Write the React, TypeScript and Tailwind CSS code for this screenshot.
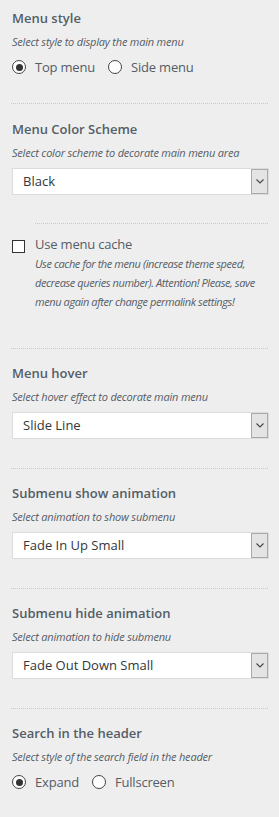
import React from 'react';

const font = { fontFamily: '"Open Sans", "Noto Sans", sans-serif' };

function Separator({ indent = false }: { indent?: boolean }) {
  return (
    <div
      className={`h-0 border-t border-dotted border-[#c8c8c8] mr-[11px] ${indent ? 'ml-[35px]' : 'ml-[11px]'}`}
    />
  );
}

function Title({ children }: { children: React.ReactNode }) {
  return <div className="text-[13px] leading-[20px] font-semibold text-[#555d66]">{children}</div>;
}

function Hint({ children }: { children: React.ReactNode }) {
  return <div className="mt-[5px] text-[11px] leading-[18px] italic tracking-[-0.2px] text-[#555d66]">{children}</div>;
}

function Radio({ checked, label }: { checked?: boolean; label: string }) {
  return (
    <label className="flex items-center gap-[9px]">
      <span className="flex h-[14px] w-[14px] items-center justify-center rounded-full border border-[#444] bg-white">
        {checked && <span className="h-[7px] w-[7px] rounded-full bg-[#333]" />}
      </span>
      <span className="text-[13px] leading-[20px] tracking-[-0.2px] text-[#555d66]">{label}</span>
    </label>
  );
}

function Select({ value }: { value: string }) {
  return (
    <div className="mt-[6px] flex h-[27px] items-stretch border border-[#dcdcdc] bg-white">
      <div className="flex flex-1 items-center pl-[10px] text-[13px] text-[#32373c]">{value}</div>
      <div className="m-0 flex w-[17px] items-center justify-center border border-[#a9a9a9] bg-[#e4e4e4]">
        <svg width="8" height="5" viewBox="0 0 8 5" fill="none">
          <path d="M0.5 0.5 L4 4 L7.5 0.5" stroke="#444" strokeWidth="1.1" />
        </svg>
      </div>
    </div>
  );
}

function SelectSection({ title, hint, value }: { title: string; hint: string; value: string }) {
  return (
    <div className="pl-[12px] pr-[10px] pt-[14px] pb-[29px]">
      <Title>{title}</Title>
      <Hint>{hint}</Hint>
      <Select value={value} />
    </div>
  );
}

export default function App() {
  return (
    <div className="min-h-[817px] w-[279px] bg-[#eeeeee]" style={font}>
      {/* Menu style */}
      <div className="pl-[12px] pr-[10px] pt-[8px] pb-[26px]">
        <Title>Menu style</Title>
        <Hint>Select style to display the main menu</Hint>
        <div className="mt-[6px] flex items-center gap-[13px]">
          <Radio checked label="Top menu" />
          <Radio label="Side menu" />
        </div>
      </div>
      <Separator />

      <div className="pl-[12px] pr-[10px] pt-[15px] pb-[28px]">
        <Title>Menu Color Scheme</Title>
        <Hint>Select color scheme to decorate main menu area</Hint>
        <Select value="Black" />
      </div>
      <Separator indent />

      {/* Menu cache */}
      <div className="flex gap-[10px] pl-[12px] pr-[8px] pt-[15px] pb-[37px]">
        <span className="mt-[1px] h-[13px] w-[13px] shrink-0 border border-[#333] bg-white" />
        <div className="-mt-[5px]">
          <div className="text-[13px] leading-[20px] tracking-[-0.2px] text-[#555d66]">Use menu cache</div>
          <div className="text-[11px] leading-[19px] italic tracking-[-0.4px] text-[#555d66]">
            Use cache for the menu (increase theme speed, decrease queries number). Attention! Please, save menu again after change permalink settings!
          </div>
        </div>
      </div>
      <Separator />

      <SelectSection title="Menu hover" hint="Select hover effect to decorate main menu" value="Slide Line" />
      <Separator />
      <SelectSection title="Submenu show animation" hint="Select animation to show submenu" value="Fade In Up Small" />
      <Separator />
      <SelectSection title="Submenu hide animation" hint="Select animation to hide submenu" value="Fade Out Down Small" />
      <Separator />

      {/* Search */}
      <div className="pl-[12px] pr-[10px] pt-[14px] pb-[26px]">
        <Title>Search in the header</Title>
        <Hint>Select style of the search field in the header</Hint>
        <div className="mt-[6px] flex items-center gap-[13px]">
          <Radio checked label="Expand" />
          <Radio label="Fullscreen" />
        </div>
      </div>
    </div>
  );
}
